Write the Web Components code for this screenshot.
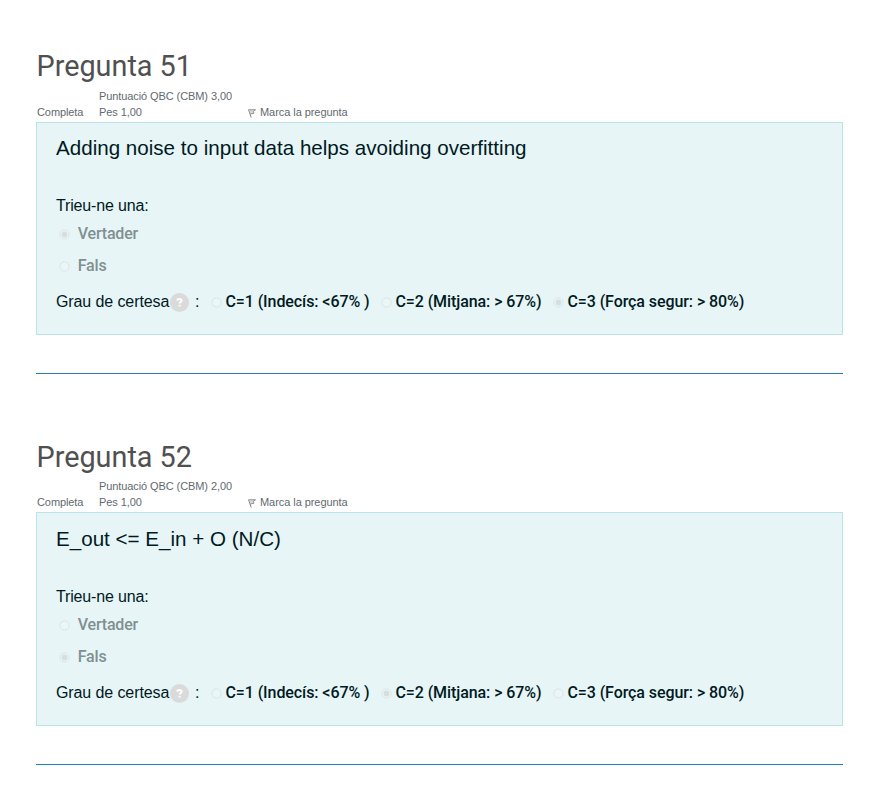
<!DOCTYPE html>
<html lang="ca"><head><meta charset="utf-8"><title>Qüestionari</title>
<style>body{margin:0;background:#fff;font-family:"Liberation Sans",Arial,sans-serif;color:#001a1e}</style></head><body>
<quiz-page></quiz-page>
<script>
class QuizRadio extends HTMLElement{
connectedCallback(){
const on=this.hasAttribute('checked');
this.attachShadow({mode:'open'}).innerHTML=`<style>:host{display:inline-flex;align-items:center;white-space:nowrap;font-family:Roboto,sans-serif;font-weight:500;font-size:16px;line-height:24px;letter-spacing:var(--track,-.08px)}svg{width:11px;height:11px;flex:none;margin:0 var(--gap,3px) 0 0}</style><svg viewBox="0 0 11 11"><circle cx="5.5" cy="5.5" r="4.6" fill="#ebf6f6" stroke="#dbe3e4" stroke-width="1"/>${on?'<circle cx="5.5" cy="5.5" r="2.9" fill="#d6dfe0"/>':''}</svg><span><slot></slot></span>`;
}}
customElements.define('quiz-radio',QuizRadio);
class QuizInfo extends HTMLElement{
connectedCallback(){
this.attachShadow({mode:'open'}).innerHTML=`<style>:host{display:grid;grid-template-columns:62px 149px auto;font-size:11px;line-height:16px;height:32px;color:#626a70;align-items:end;padding-left:1px;letter-spacing:-.09px}.flag{display:flex;align-items:center;letter-spacing:-.06px}svg{width:8px;height:9px;margin:2px 4px 0 0}</style><span>Completa</span><span>Puntuació QBC (CBM) ${this.getAttribute('score')}<br>Pes 1,00</span><span class="flag"><svg viewBox="0 0 8 9"><path d="M.5.8 7.5.8 5.3 2.4 6 4.2 2.2 5M.6.8 3.2 8.5" fill="none" stroke="#777" stroke-width=".9"/><path d="M.6.8H7.2L5.3 2.4 6 4.2 2 5Z" fill="#bbb" opacity=".6"/></svg><span>Marca la pregunta</span></span>`;
}}
customElements.define('quiz-info',QuizInfo);
class QuizQuestion extends HTMLElement{
connectedCallback(){
const a=this.getAttribute('answer'),c=+this.getAttribute('certainty');
const k=(v)=>v?'checked':'';
this.attachShadow({mode:'open'}).innerHTML=`<style>
:host{display:block;height:391px;box-sizing:border-box}
h3{margin:0;padding-left:.5px;font:400 28.8px/36px Roboto,sans-serif;color:#505050;height:var(--head,40px)}
.box{box-sizing:border-box;height:var(--box,213px);margin-top:2px;border:1px solid #b8e4ea;background:#e7f5f7;padding:var(--top,11px) 19px 0}
.text{font-size:20.6px;line-height:28px;height:60px}
.prompt{font-size:16px;line-height:24px;height:24px;letter-spacing:-.15px}
.answers{display:flex;flex-direction:column;gap:8px;margin:4px 0 12px 3px;color:#7f9091}
.answers quiz-radio{--gap:7.7px;--track:-.18px}
.certainty{display:flex;align-items:center;font-size:16px;line-height:24px;white-space:nowrap}
.certainty>span:first-child{width:113px;letter-spacing:-.1px}
.help{width:19px;height:19px;margin:1px 6px 0 1px;flex:none}
.c1{margin-left:12px;width:170px}.c2{width:172px}
hr{border:0;height:1px;background:var(--rule);margin:38px 0 0}
</style><h3>Pregunta ${this.getAttribute('number')}</h3><quiz-info score="${this.getAttribute('score')}"></quiz-info>
<div class="box"><div class="text"><slot></slot></div><div class="prompt">Trieu-ne una:</div>
<div class="answers"><quiz-radio ${k(a==='v')}>Vertader</quiz-radio><quiz-radio ${k(a==='f')}>Fals</quiz-radio></div>
<div class="certainty"><span>Grau de certesa</span><svg class="help" viewBox="0 0 19 19"><circle cx="9.5" cy="9.5" r="9.5" fill="#dadada"/><path d="M7.2 7.7Q7.4 6.1 9.5 6.1T11.7 7.7C11.7 9 9.6 9.1 9.6 10.5M9.6 11.7V13.6" fill="none" stroke="#fff" stroke-width="2"/></svg><span>:</span><quiz-radio class="c1" ${k(c===1)}>C=1 (Indecís: &lt;67% )</quiz-radio><quiz-radio class="c2" ${k(c===2)}>C=2 (Mitjana: &gt; 67%)</quiz-radio><quiz-radio ${k(c===3)}>C=3 (Força segur: &gt; 80%)</quiz-radio></div></div><hr>`;
}}
customElements.define('quiz-question',QuizQuestion);
class QuizPage extends HTMLElement{
connectedCallback(){
this.attachShadow({mode:'open'}).innerHTML=`<style>:host{display:block;box-sizing:border-box;height:792px;overflow:hidden;padding:48px 37px 0 36px}quiz-question{--rule:#2a7ab0}.last{--rule:#1c7fc0;--head:39px;--box:214px;--top:12px}</style>
<quiz-question number="51" score="3,00" answer="v" certainty="3">Adding noise to input data helps avoiding overfitting</quiz-question><quiz-question class="last" number="52" score="2,00" answer="f" certainty="2">E_out &lt;= E_in + O (N/C)</quiz-question>`;
}}
customElements.define('quiz-page',QuizPage);
</script></body></html>
